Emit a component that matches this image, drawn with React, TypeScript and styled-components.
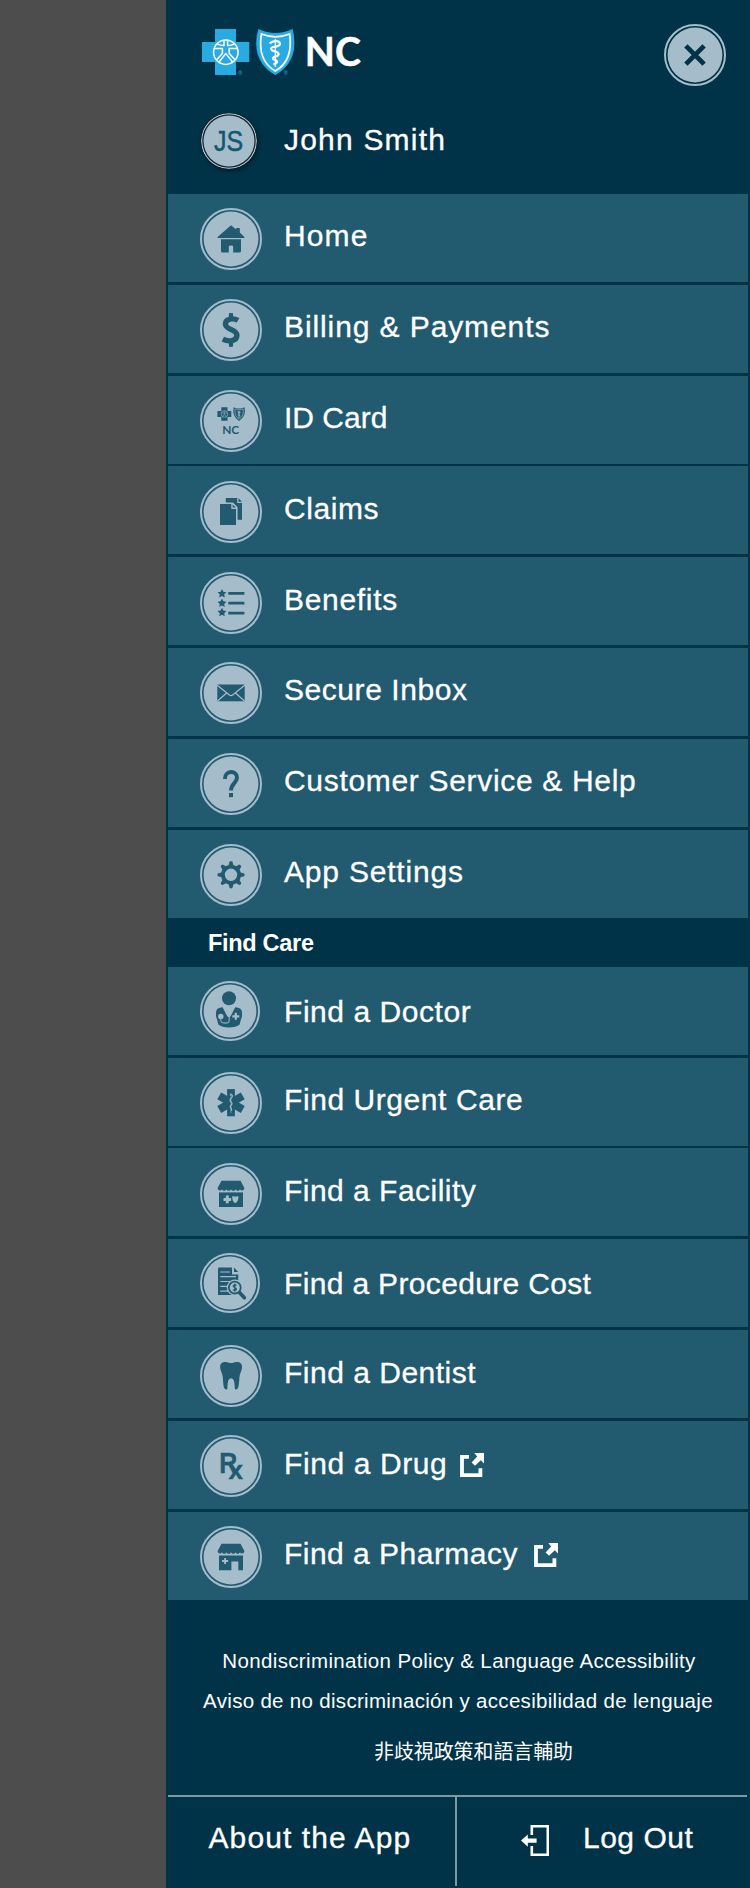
import React from "react";
import styled, { createGlobalStyle } from "styled-components";

const NAVY = "#003347";
const TEAL = "#225a70";
const MIST = "#a5bdcb";
const SKY = "#29abe2";

const GlobalStyle = createGlobalStyle`
  body {
    margin: 0;
    background: #4d4d4d;
    font-family: "Liberation Sans", "Noto Sans CJK TC", sans-serif;
    color: #fff;
  }
`;

const Screen = styled.div`
  display: flex;
  justify-content: flex-end;
  width: 750px;
  height: 1888px;
  overflow: hidden;
  background: #4d4d4d;
`;

const Drawer = styled.nav`
  display: flex;
  flex-direction: column;
  width: 584px;
  height: 1888px;
  background: ${NAVY};
`;

const Header = styled.header`
  display: flex;
  justify-content: space-between;
  align-items: flex-start;
  height: 113px;
  padding: 0 24px 0 36px;
  box-sizing: border-box;
`;

const Brand = styled.svg`
  display: block;
  margin-top: 28px;
  overflow: visible;
`;

const CloseButton = styled.button`
  margin: 23.5px 0 0;
  padding: 0;
  border: 0;
  background: none;
`;

const Profile = styled.div`
  display: flex;
  align-items: flex-start;
  height: 81px;
  padding-left: 35px;
`;

const Avatar = styled.svg`
  display: block;
  border-radius: 50%;
  box-shadow: 1px 2px 5px rgba(0, 0, 0, 0.45);
`;

const Label = styled.span<{ $drop?: number; $track?: number }>`
  margin-top: ${(p) => p.$drop ?? 25}px;
  font-size: 30px;
  line-height: 34px;
  letter-spacing: ${(p) => p.$track ?? 0}px;
  white-space: nowrap;
  -webkit-text-stroke: 0.3px #fff;
`;

const ProfileName = styled(Label)`
  margin: 9.5px 0 0 27px;
`;

const Menu = styled.ul`
  display: grid;
  grid-auto-rows: 88px;
  row-gap: 2.84px;
  margin: 0 2px;
  padding: 0;
  list-style: none;
`;

const MenuRow = styled.li`
  display: flex;
  align-items: flex-start;
  padding-left: 32px;
  background: ${TEAL};
`;

const BadgeSlot = styled.span<{ $top?: number }>`
  display: block;
  width: 84px;
  margin-top: ${(p) => p.$top ?? 14}px;
`;

const BadgeSvg = styled.svg`
  display: block;
`;

const External = styled.svg<{ $gap: number; $top?: number }>`
  display: block;
  margin: ${(p) => p.$top ?? 32}px 0 0 ${(p) => p.$gap}px;
`;

const SectionTitle = styled.h2`
  height: 49px;
  margin: 0;
  padding: 12px 0 0 42px;
  box-sizing: border-box;
  font-size: 23.5px;
  line-height: 27px;
  letter-spacing: -0.3px;
`;

const Legal = styled.div`
  display: flex;
  flex-direction: column;
  align-items: center;
  height: 195px;
  padding-top: 49px;
  box-sizing: border-box;
`;

const LegalLink = styled.a<{ $track?: number; $left?: number; $drop?: number }>`
  margin: ${(p) => p.$drop ?? 0}px 0 0 ${(p) => p.$left ?? 0}px;
  font-size: 20.5px;
  line-height: 24px;
  letter-spacing: ${(p) => p.$track ?? 0}px;
  white-space: nowrap;
`;

const ChineseLink = styled(LegalLink)`
  font-family: "Noto Sans CJK TC", sans-serif;
  font-size: 19.9px;
`;

const Footer = styled.footer`
  display: flex;
  width: 579px;
  height: 91px;
  margin-left: 1.5px;
  border-top: 2px solid #7f99a3;
  box-sizing: border-box;
`;

const FooterCell = styled.div<{ $divided?: boolean }>`
  display: flex;
  align-items: flex-start;
  box-sizing: border-box;
  height: 89px;
  width: 289.5px;
  padding-left: ${(p) => (p.$divided ? 41 : 64)}px;
  border-right: ${(p) => (p.$divided ? "2px solid #7f99a3" : "0")};
`;

const LogOutIcon = styled.svg`
  display: block;
  margin: 28px 34px 0 0;
`;

type BadgeProps = { size?: number; ink?: string; children: React.ReactNode };

const Badge = ({ size = 62, ink = TEAL, children }: BadgeProps) => (
  <BadgeSvg width={size} height={size} viewBox={`0 0 ${size} ${size}`} fill={ink}>
    <circle cx={size / 2} cy={size / 2} r={size / 2 - 1} fill="none" stroke={MIST} strokeWidth="2" />
    <circle cx={size / 2} cy={size / 2} r={size / 2 - 3.6} fill={MIST} />
    {children}
  </BadgeSvg>
);

const starPoints = (cx: number, cy: number, r: number) =>
  Array.from({ length: 10 }, (_, i) => {
    const d = i % 2 ? r * 0.5 : r;
    const a = (Math.PI / 5) * i - Math.PI / 2;
    return `${(cx + d * Math.cos(a)).toFixed(2)},${(cy + d * Math.sin(a)).toFixed(2)}`;
  }).join(" ");

const awning =
  "M21.5 17.7H40.5L44.4 25C44.4 28 40.8 28 40 26.2C39 28.2 36.6 28.2 35.6 26.2C34.6 28.2 32 28.2 31 26.2C30 28.2 27.4 28.2 26.4 26.2C25.4 28.2 23 28.2 22 26.2C21.2 28 17.6 28 17.6 25Z";

const glyphs: Record<string, React.ReactNode> = {
  home: (
    <>
      <path d="M31 17.3L36.3 21.6V20H39.8V24.6L44.4 29V30H17.6V29Z" />
      <path d="M21 31.3H41V43.3Q41 44.4 40 44.4H33.2V38.6Q33.2 37.4 31 37.4T28.8 38.6V44.4H22Q21 44.4 21 43.3Z" />
    </>
  ),
  dollar: (
    <>
      <path
        d="M38 21.4C34.3 19.2 25.4 18.8 25.4 25C25.4 31.3 36.9 29.6 36.9 36.3C36.9 42.6 28.3 43 22.8 40.2"
        fill="none"
        stroke={TEAL}
        strokeWidth="5.4"
      />
      <path d="M28.9 14.3Q31 13.6 33.1 14.3V20H28.9ZM28.9 42H33.1V47.6Q31 48.4 28.9 47.6Z" />
    </>
  ),
  card: (
    <>
      <path d="M21.3 17.3H27.5V21H31.3V27H27.5V30.8H21.3V27H17.4V21H21.3Z" />
      <circle cx="24.4" cy="24" r="3.3" fill="none" stroke={MIST} strokeWidth="0.6" />
      <path d="M24.4 21V24L22.4 27M24.4 24L26.4 27M21.5 23H27.3" fill="none" stroke={MIST} strokeWidth="0.5" />
      <path d="M33.6 17.2Q39 19.6 44.6 17.2Q46.4 26.4 39 31Q31.8 26.4 33.6 17.2Z" />
      <path d="M35 19Q39 20.4 43.2 19Q44.2 26 39 29.2Q34 26 35 19Z" fill="none" stroke={MIST} strokeWidth="0.6" />
      <path d="M39 20.8V28M37.5 22H40.3L38 24.3L40.3 26" fill="none" stroke={MIST} strokeWidth="0.9" />
      <text
        x="22.2"
        y="43.7"
        fontFamily="Lato, sans-serif"
        fontSize="11.7"
        fontWeight="700"
        textLength="17"
        lengthAdjust="spacingAndGlyphs"
      >
        NC
      </text>
    </>
  ),
  claims: (
    <>
      <path d="M25.8 17H37.2V21.9H42V38.7H37.6V26.2L33 21.4H25.8Z" />
      <path d="M38.5 17.2L42 20.7H38.5Z" />
      <path d="M19.4 22.4H32.4L36.6 26.6V44.6H19.4Z" fill={MIST} />
      <path d="M20 23H31.3V27.9H36V44H20Z" />
      <path d="M32.6 23.4L35.8 26.6H32.6Z" />
    </>
  ),
  benefits: (
    <>
      {[21.6, 31.2, 40.5].map((y) => (
        <polygon key={y} points={starPoints(22, y, 4.7)} />
      ))}
      <path d="M28.3 20H44.4V22.8H28.3ZM28.3 29.8H44.4V32.6H28.3ZM28.3 39.8H44.4V42.6H28.3Z" />
    </>
  ),
  inbox: (
    <>
      <rect x="17.3" y="22.5" width="27.4" height="16.8" />
      <path
        d="M17 23L29 32.8Q31 34.3 33 32.8L45 23M17.5 39L26.6 31M44.5 39L35.4 31"
        fill="none"
        stroke={MIST}
        strokeWidth="1.2"
      />
    </>
  ),
  help: (
    <>
      <path
        d="M25 26C24.6 17 37 16.8 37 24.6C37 30 31 30.4 31 37.6"
        fill="none"
        stroke={TEAL}
        strokeWidth="4"
      />
      <rect x="29" y="40" width="4" height="4.2" />
    </>
  ),
  settings: (
    <>
      <circle cx="31" cy="30.8" r="8.1" fill="none" stroke={TEAL} strokeWidth="3.8" />
      {[0, 45, 90, 135, 180, 225, 270, 315].map((a) => (
        <path
          key={a}
          transform={`rotate(${a} 31 30.8)`}
          d="M28.2 22.6L29.6 17.6Q31 16.7 32.4 17.6L33.8 22.6Z"
        />
      ))}
    </>
  ),
  doctor: (
    <>
      <circle cx="29" cy="17.3" r="7" />
      <path d="M22.6 26.2Q16 26.4 16 31.5V35.5Q17.5 39 18.3 43.6Q22 46.6 29 46.6T39.7 43.6Q40.5 39 42 35.5V31.5Q42 26.4 35.2 26.2L31 34.6L30 36H28L26.8 34.6Z" />
      <circle cx="20.8" cy="35.4" r="2.7" fill={MIST} />
      <path
        d="M20.8 37.5V39.4Q20.8 42 23.5 42H27.2Q29.2 42 29.2 39.6V34"
        fill="none"
        stroke={MIST}
        strokeWidth="1"
      />
      <path d="M35.8 31.8V38.8M32.3 35.3H39.3" stroke={MIST} strokeWidth="2.2" />
    </>
  ),
  urgent: (
    <>
      {[0, 60, 120].map((a) => (
        <rect key={a} x="27.1" y="17.1" width="7.8" height="27.2" transform={`rotate(${a} 31 30.7)`} />
      ))}
      <path d="M31 21V41" stroke={MIST} strokeWidth="0.6" />
      <path
        d="M29.8 23.2Q32.6 21.8 32.4 24T30.4 27Q29.4 29 31.2 30.2Q33 31.8 31 33.2Q29.4 34.6 31 36Q32.2 37.2 31 38.8"
        fill="none"
        stroke={MIST}
        strokeWidth="1.1"
      />
    </>
  ),
  facility: (
    <>
      <path d={awning} />
      <rect x="19" y="29.4" width="24" height="14.6" />
      <path d="M27.3 32.6V40.2M23.5 36.4H31.1" stroke={MIST} strokeWidth="3" />
      <path d="M32.3 33Q35.3 34.2 38.3 33Q39 38 35.3 40.2Q31.6 38 32.3 33Z" fill={MIST} />
    </>
  ),
  cost: (
    <>
      <path d="M19.2 14.6H32V21.4H38.3V42H18V15.8Q18 14.6 19.2 14.6Z" />
      <path d="M34 14.6L38.3 19H34Z" />
      <path
        d="M20.3 19H29.8M20.3 23.7H36M20.3 28.5H30M20.3 33.4H27.3M20.3 38.2H28"
        stroke={MIST}
        strokeWidth="1.2"
      />
      <circle cx="34.8" cy="34.6" r="8" fill={MIST} />
      <path d="M39 39L44.4 44.8" stroke={TEAL} strokeWidth="3.6" strokeLinecap="round" />
      <circle cx="34.8" cy="34.6" r="5.9" fill={MIST} stroke={TEAL} strokeWidth="1.8" />
      <path
        d="M36.6 32.4C34.8 31.4 32.8 32 33.2 33.4C33.6 34.8 36.6 34.4 36.4 36.2C36.2 37.6 34.2 37.6 32.8 36.8M34.8 30.6V38.8"
        fill="none"
        stroke={TEAL}
        strokeWidth="1.3"
      />
    </>
  ),
  dentist: (
    <path d="M24.3 17C27.5 16.6 28.6 18 31 18S34.8 16.6 37.9 17C41.4 17.5 42.6 20.3 41.8 24C41 27.4 39.7 28.6 39.4 32.4C39.1 36.2 39 40.6 38 43Q37.2 44.9 35 44.2C34.2 41.4 35.4 33.6 31 33.3C26.8 33.6 27.9 41.4 27.2 44.2Q25 44.9 24.2 43C23.2 40.6 23.1 36.2 22.8 32.4C22.5 28.6 21.2 27.4 20.4 24C19.6 20.3 20.8 17.5 24.3 17Z" />
  ),
  drug: (
    <g fontFamily="Liberation Sans, sans-serif" fontWeight="700">
      <text
        x="19.2"
        y="37.5"
        fontSize="29"
        textLength="18"
        lengthAdjust="spacingAndGlyphs"
        stroke={TEAL}
        strokeWidth="0.4"
      >
        R
      </text>
      <text x="28.6" y="43.8" fontSize="26" stroke={TEAL} strokeWidth="0.4">
        x
      </text>
    </g>
  ),
  pharmacy: (
    <>
      <path d={awning} />
      <path d="M19 29.4H43V44.3H38.3V35.6H31.4V44.3H19Z" />
      <path d="M25.1 32V38M22.1 35H28.1" stroke={MIST} strokeWidth="1.8" />
    </>
  ),
};

type Item = {
  icon: string;
  text: string;
  track?: number;
  drop?: number;
  top?: number;
  size?: number;
  external?: number;
  externalTop?: number;
};

const mainItems: Item[] = [
  { icon: "home", text: "Home", track: 1.1 },
  { icon: "dollar", text: "Billing & Payments", track: 0.9 },
  { icon: "card", text: "ID Card", track: 0, top: 14.3 },
  { icon: "claims", text: "Claims", track: 0.55, drop: 25.8, top: 14.5 },
  { icon: "benefits", text: "Benefits", track: 0.68, drop: 25.8, top: 14.6 },
  { icon: "inbox", text: "Secure Inbox", track: 0.56, top: 13.6 },
  { icon: "help", text: "Customer Service & Help", track: 0.68 },
  { icon: "settings", text: "App Settings", track: 0.8 },
];

const careItems: Item[] = [
  { icon: "doctor", text: "Find a Doctor", track: 0.55, size: 60, drop: 28, top: 14 },
  { icon: "urgent", text: "Find Urgent Care", track: 0.57 },
  { icon: "facility", text: "Find a Facility", track: 0.48, drop: 25.8, top: 14.4 },
  { icon: "cost", text: "Find a Procedure Cost", track: 0.34, size: 60, drop: 27.8, top: 13.5 },
  { icon: "dentist", text: "Find a Dentist", track: 0.5, drop: 25.8, top: 14.7 },
  { icon: "drug", text: "Find a Drug", track: 0.6, drop: 26, top: 14.5, external: 12.6 },
  { icon: "pharmacy", text: "Find a Pharmacy", track: 0.48, top: 13.8, external: 16, externalTop: 31 },
];

const MenuList = ({ items }: { items: Item[] }) => (
  <Menu>
    {items.map((item) => (
      <MenuRow key={item.icon}>
        <BadgeSlot $top={item.top}>
          <Badge size={item.size}>{glyphs[item.icon]}</Badge>
        </BadgeSlot>
        <Label $drop={item.drop} $track={item.track}>
          {item.text}
        </Label>
        {item.external !== undefined && (
          <External
            $gap={item.external}
            $top={item.externalTop}
            width="24"
            height="24"
            viewBox="0 0 24 24"
            fill="#fff"
          >
            <path d="M9 3.8H2V22.2H20.4V15.3" fill="none" stroke="#fff" strokeWidth="3.8" />
            <path d="M14.3 0H24V10.4L20.8 7.2L15 12.8L11.6 9.4L17.2 3.6Z" />
          </External>
        )}
      </MenuRow>
    ))}
  </Menu>
);

const App = () => (
  <>
    <GlobalStyle />
    <Screen>
      <Drawer>
        <Header>
          <Brand width="162" height="50" viewBox="0 0 162 50">
            <path d="M13 1H34V14H47.3V34H34V47H13V34H0V14H13Z" fill={SKY} />
            <g fill="none" stroke="#fff" strokeWidth="1.5">
              <circle cx="23.8" cy="24.2" r="12.2" />
              <path d="M15 15.8Q18.6 17.6 22 17.4V12.4M32.6 15.8Q29 17.6 25.6 17.4V12.4" />
              <path d="M12.4 20.4H20.4V25.4L14.4 32M35.2 20.4H27.2V25.4L33.2 32" />
              <path d="M17 34L23.8 25.6L30.6 34" />
            </g>
            <path
              d="M56.4 1Q73.5 8.8 90.6 1Q92.4 7 92.4 15.5C92.4 32 83 41.8 73.3 47C63.6 41.8 54.2 32 54.2 15.5Q54.2 7 56.4 1Z"
              fill={SKY}
            />
            <path
              d="M59.4 6Q73.5 11.6 87.6 6C90.4 25 85 36.4 73.3 43C61.6 36.4 56.4 25 59.4 6Z"
              fill="none"
              stroke="#fff"
              strokeWidth="1.7"
            />
            <path d="M73.3 11V39" stroke="#fff" strokeWidth="1.2" />
            <path
              d="M67.6 15.4Q71 12.4 75 13.2Q79 14 77.6 17Q76 18.6 71 19Q67.6 20.2 70.4 22.6Q77 24 76.6 26.6Q75.6 28.6 71.6 29.2Q70 30.8 72.4 31.8Q75.6 32.6 75 34.4Q74 36 71.4 36.2"
              fill="none"
              stroke="#fff"
              strokeWidth="2.2"
            />
            <g fill={SKY} fontFamily="Liberation Sans, sans-serif" fontSize="5.5">
              <text x="36.2" y="46.6">®</text>
              <text x="81.8" y="46.6">®</text>
            </g>
            <text
              x="102.8"
              y="38.3"
              fill="#fff"
              stroke="#fff"
              strokeWidth="0.5"
              fontFamily="Lato, sans-serif"
              fontSize="40.5"
              fontWeight="700"
              textLength="56"
              lengthAdjust="spacingAndGlyphs"
            >
              NC
            </text>
          </Brand>
          <CloseButton aria-label="Close">
            <Badge ink={NAVY}>
              <path d="M21.9 21.9L40.1 40.1M40.1 21.9L21.9 40.1" stroke={NAVY} strokeWidth="4.8" />
            </Badge>
          </CloseButton>
        </Header>
        <Profile>
          <Avatar width="56" height="56" viewBox="0 0 56 56">
            <circle cx="28" cy="28" r="28" fill="#17222b" />
            <circle cx="28" cy="28" r="27.3" fill="none" stroke="#c4d2da" strokeWidth="1.1" />
            <circle cx="28" cy="28" r="25.5" fill={MIST} />
            <text
              x="13"
              y="38.4"
              fill="#14576f"
              stroke="#14576f"
              strokeWidth="0.5"
              fontFamily="Liberation Sans, sans-serif"
              fontSize="29"
              textLength="29.2"
              lengthAdjust="spacingAndGlyphs"
            >
              JS
            </text>
          </Avatar>
          <ProfileName $track={1.2}>John Smith</ProfileName>
        </Profile>
        <MenuList items={mainItems} />
        <SectionTitle>Find Care</SectionTitle>
        <MenuList items={careItems} />
        <Legal>
          <LegalLink $track={0.36} $left={2}>
            Nondiscrimination Policy &amp; Language Accessibility
          </LegalLink>
          <LegalLink $track={0.31} $drop={16}>
            Aviso de no discriminación y accesibilidad de lenguaje
          </LegalLink>
          <ChineseLink $drop={26} $left={31}>
            非歧視政策和語言輔助
          </ChineseLink>
        </Legal>
        <Footer>
          <FooterCell $divided>
            <Label $track={1.1} $drop={24}>
              About the App
            </Label>
          </FooterCell>
          <FooterCell>
            <LogOutIcon width="28" height="31" viewBox="0 0 28 31">
              <path d="M10.8 10V1.3H26.8V29.7H10.8V21" fill="none" stroke="#fff" strokeWidth="2.6" />
              <path d="M0 15.6L6.8 9.4V13.4H15.6V17.8H6.8V21.8Z" fill="#fff" />
            </LogOutIcon>
            <Label $track={0.5} $drop={24}>
              Log Out
            </Label>
          </FooterCell>
        </Footer>
      </Drawer>
    </Screen>
  </>
);

export default App;
